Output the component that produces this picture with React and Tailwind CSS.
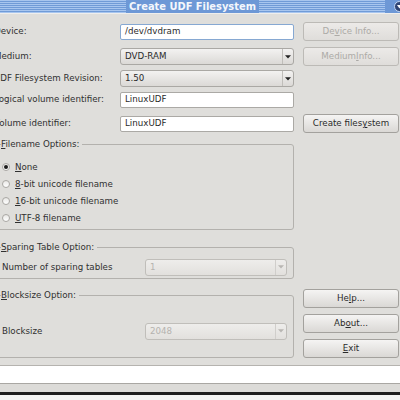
import React from "react";

const FONT = { fontFamily: '"DejaVu Sans", Verdana, sans-serif' };

function U({ children }) {
  return <span className="underline underline-offset-[1px] decoration-[0.8px]">{children}</span>;
}

function Arrow({ disabled }) {
  return (
    <svg width="6" height="4" viewBox="0 0 6 4">
      <path d="M0 0.3 H6 L3 3.6 Z" fill={disabled ? "#b8b6b2" : "#222"} />
    </svg>
  );
}

function Combo({ value, disabled, className }) {
  return (
    <div
      className={`flex h-[17px] rounded-[3px] border bg-gradient-to-b ${
        disabled
          ? "border-[#c0beba] from-[#eeedeb] to-[#e2e0dd] text-[#b5b3af]"
          : "border-[#aaa8a4] from-[#f3f2f1] to-[#dbd9d6] text-[#2a2a2a]"
      } ${className}`}
    >
      <div className="flex flex-1 items-center pl-[4px]">{value}</div>
      <div
        className={`flex w-[11px] items-center justify-center border-l ${
          disabled ? "border-[#d0cecb]" : "border-[#c0beba]"
        }`}
      >
        <Arrow disabled={disabled} />
      </div>
    </div>
  );
}

function Input({ value, focused, className }) {
  return (
    <div
      className={`flex h-[16px] items-center rounded-[2px] border bg-white pl-[4px] text-[#2a2a2a] ${
        focused ? "border-[#86a8d2]" : "border-[#aba9a5]"
      } ${className}`}
    >
      {value}
    </div>
  );
}

function Btn({ children, disabled, className }) {
  return (
    <div
      className={`flex h-[19px] w-[96px] items-center justify-center rounded-[3px] border bg-gradient-to-b ${
        disabled
          ? "border-[#bcbab6] from-[#eceae8] to-[#dfddda] text-[#acaaa6]"
          : "border-[#a3a19d] from-[#f5f4f3] to-[#dad8d5] text-[#2a2a2a]"
      } ${className}`}
    >
      {children}
    </div>
  );
}

function Radio({ checked, children }) {
  return (
    <div className="flex h-[17px] items-center">
      <div className="ml-[1px] flex h-[8px] w-[8px] items-center justify-center rounded-full border border-[#aaa8a4] bg-gradient-to-b from-[#e9e8e6] to-white">
        {checked && <div className="h-[4px] w-[4px] rounded-full bg-[#1a1a1a]" />}
      </div>
      <span className="ml-[5px] text-[#303030]">{children}</span>
    </div>
  );
}

function TitleBar() {
  const stripes =
    "h-[13px] flex-1 bg-[repeating-linear-gradient(to_bottom,#a8c6ef_0px,#a8c6ef_1px,#709bd7_1px,#709bd7_2px)]";
  return (
    <div className="flex h-[13px] items-stretch bg-[#6d98d6]">
      <div className={stripes} />
      <div className="flex items-center px-[3px] text-[9.9px] font-bold leading-none text-[#f4f7fc]">
        Create UDF Filesystem
      </div>
      <div className={stripes} />
      <div className="flex w-[15px] items-center justify-end">
        <div className="mr-[-5px] flex h-[11px] w-[11px] items-center justify-center rounded-full border border-[#c4d6f2] bg-[#2f4574]">
          <svg width="5" height="4" viewBox="0 0 5 4">
            <path d="M0 0 H5 L2.5 3.5 Z" fill="#fff" />
          </svg>
        </div>
      </div>
    </div>
  );
}

function Row({ label, children, right, className }) {
  return (
    <div className={`flex items-center ${className}`}>
      <div className="w-[126px] text-[#303030]">{label}</div>
      <div className="w-[174px]">{children}</div>
      <div className="ml-[9px] w-[96px]">{right}</div>
    </div>
  );
}

export default function App() {
  return (
    <div
      className="relative h-[400px] w-[400px] overflow-hidden bg-[#dfdedb] text-[8.7px] leading-none"
      style={FONT}
    >
      <TitleBar />
      <div className="h-[1px] bg-[#efeeec]" />
      <div className="ml-[-6px] w-[412px]">
        <Row label="Device:" className="mt-[8px] h-[19px]" right={<Btn disabled>De<U>v</U>ice Info...</Btn>}>
          <Input value="/dev/dvdram" focused />
        </Row>
        <Row
          label="Medium:"
          className="mt-[6px] h-[19px]"
          right={
            <Btn disabled>
              {"Medium "}
              <U>I</U>nfo...
            </Btn>
          }
        >
          <Combo value="DVD-RAM" />
        </Row>
        <Row label="UDF Filesystem Revision:" className="mt-[4px] h-[17px]">
          <Combo value="1.50" />
        </Row>
        <Row label="Logical volume identifier:" className="mt-[4px] h-[17px]">
          <Input value="LinuxUDF" />
        </Row>
        <Row
          label="Volume identifier:"
          className="mt-[6px] h-[19px]"
          right={
            <Btn>
              {"Create files"}
              <U>y</U>stem
            </Btn>
          }
        >
          <Input value="LinuxUDF" />
        </Row>
      </div>

      <div className="mt-[7px] flex">
        <div className="ml-[-4px] w-[298px]">
          <fieldset className="h-[90px] rounded-[3px] border border-[#b3b1ad] pl-[4px]">
            <legend className="pr-[3px] text-[#303030]">
              <U>F</U>ilename Options:
            </legend>
            <div className="mt-[10px]">
              <Radio checked>
                <U>N</U>one
              </Radio>
              <Radio>
                <U>8</U>-bit unicode filename
              </Radio>
              <Radio>
                <U>1</U>6-bit unicode filename
              </Radio>
              <Radio>
                <U>U</U>TF-8 filename
              </Radio>
            </div>
          </fieldset>

          <fieldset className="mt-[13px] h-[36px] rounded-[3px] border border-[#b3b1ad] pl-[4px]">
            <legend className="pr-[3px] text-[#303030]">
              <U>S</U>paring Table Option:
            </legend>
            <div className="mt-[7px] flex items-center pr-[6px]">
              <span className="ml-[1px] flex-1 text-[#303030]">Number of sparing tables</span>
              <Combo value="1" disabled className="w-[142px]" />
            </div>
          </fieldset>

          <fieldset className="mt-[12px] h-[67px] rounded-[3px] border border-[#b3b1ad] pl-[4px]">
            <legend className="pr-[3px] text-[#303030]">
              <U>B</U>locksize Option:
            </legend>
            <div className="mt-[23px] flex items-center pr-[6px]">
              <span className="ml-[1px] flex-1 text-[#303030]">Blocksize</span>
              <Combo value="2048" disabled className="w-[142px]" />
            </div>
          </fieldset>
        </div>

        <div className="ml-[9px] flex flex-col justify-end gap-[6px]">
          <Btn>
            He<U>l</U>p...
          </Btn>
          <Btn>
            Ab<U>o</U>ut...
          </Btn>
          <Btn>
            <U>E</U>xit
          </Btn>
        </div>
      </div>

      <div className="mt-[7px] h-[1px] bg-[#b5b3af]" />
      <div className="h-[17px] bg-white" />
      <div className="h-[1px] bg-[#a9a7a3]" />
      <div className="h-[8px] bg-[#dcdbd8]" />
      <div className="h-[3px] bg-[#1e1e1e]" />
      <div className="flex h-[10px] items-center gap-[60px] bg-[#f4f4f3] pl-[8px]">
        <div className="h-[1px] w-[2px] bg-[#b0b0b0]" />
        <div className="h-[1px] w-[2px] bg-[#b0b0b0]" />
      </div>
    </div>
  );
}
